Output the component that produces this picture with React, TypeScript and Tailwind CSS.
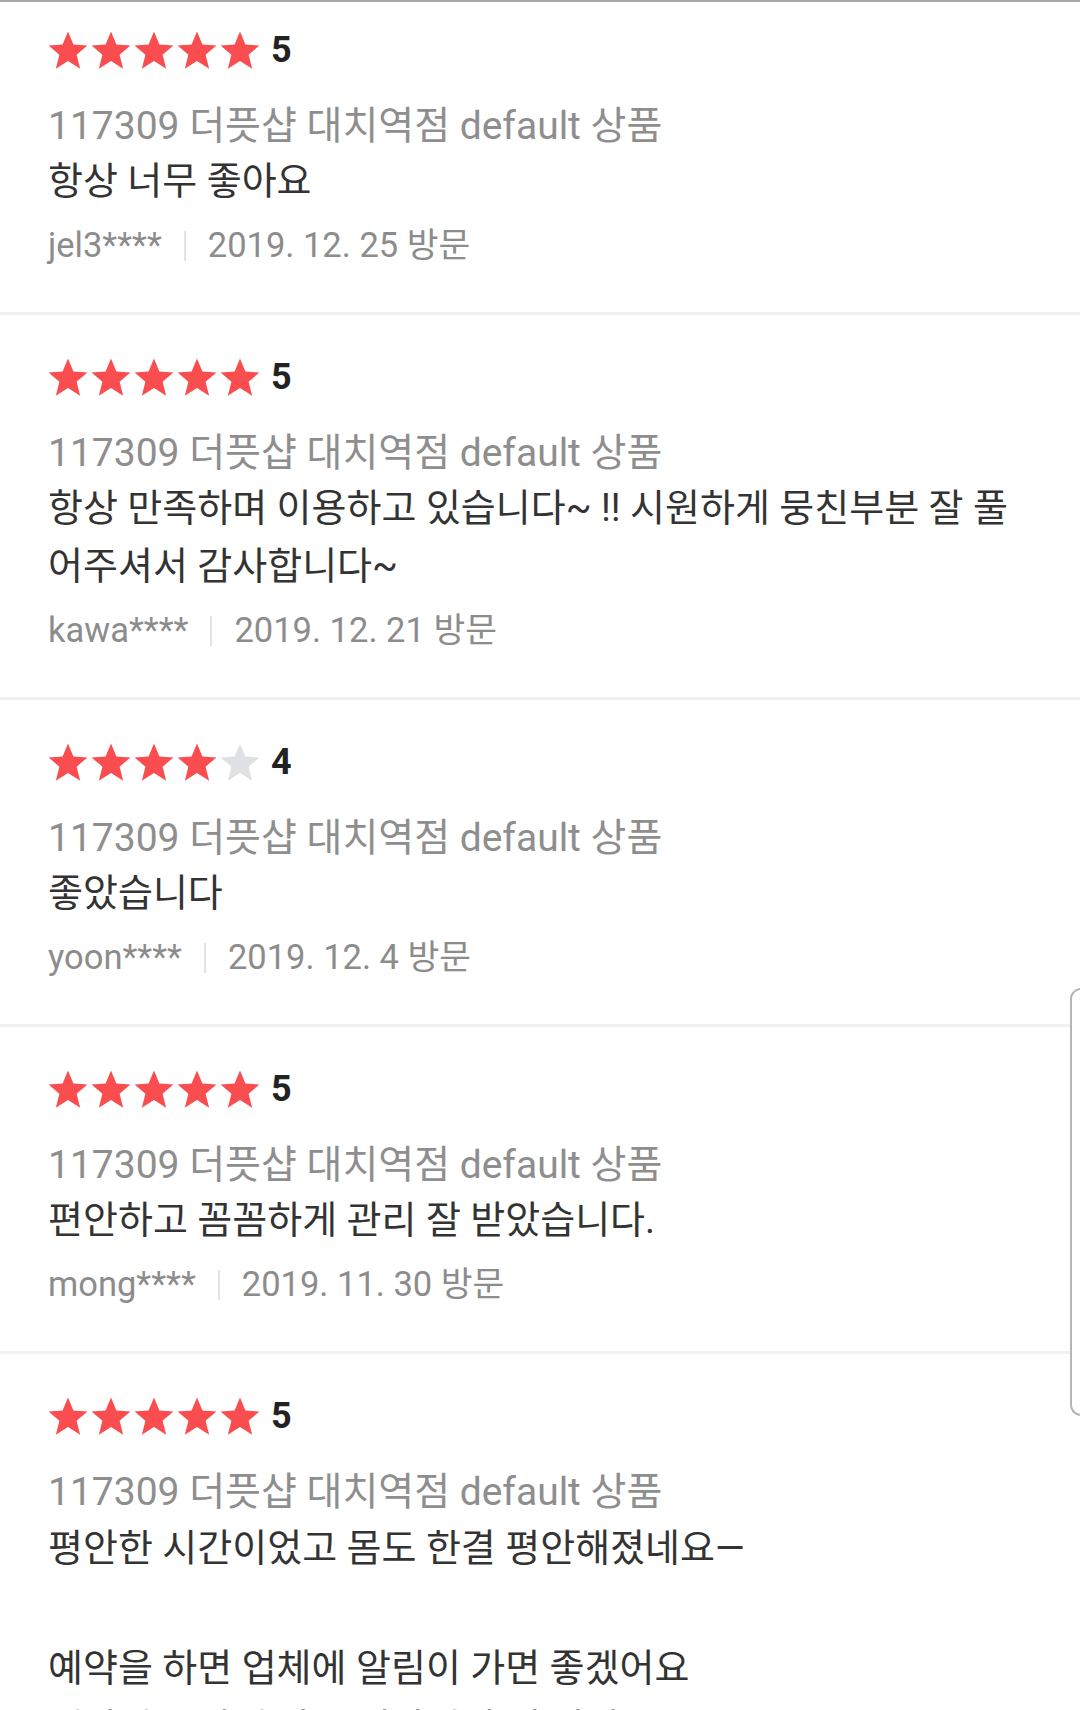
import React from 'react'

type Review = {
  rating: number
  lines: string[]
  user: string
  date: string
}

const reviews: Review[] = [
  { rating: 5, lines: ['항상 너무 좋아요'], user: 'jel3****', date: '2019. 12. 25' },
  {
    rating: 5,
    lines: ['항상 만족하며 이용하고 있습니다~ !! 시원하게 뭉친부분 잘 풀', '어주셔서 감사합니다~'],
    user: 'kawa****',
    date: '2019. 12. 21',
  },
  { rating: 4, lines: ['좋았습니다'], user: 'yoon****', date: '2019. 12. 4' },
  { rating: 5, lines: ['편안하고 꼼꼼하게 관리 잘 받았습니다.'], user: 'mong****', date: '2019. 11. 30' },
]

function Star({ on }: { on: boolean }) {
  return (
    <svg viewBox="0.5 0.5 23 22.5" className="w-[40px] h-[38px]">
      <path
        d="M12 0.8l3.2 7.7 8.3.6-6.4 5.4 2.1 8.3L12 18.3l-7.2 4.5 2.1-8.3L.5 9.1l8.3-.6z"
        fill={on ? '#fa4d4f' : '#dfe1e4'}
      />
    </svg>
  )
}

function Stars({ rating }: { rating: number }) {
  return (
    <div className="flex items-center h-[37px]">
      <div className="flex gap-[3px]">
        {[1, 2, 3, 4, 5].map(i => (
          <Star key={i} on={i <= rating} />
        ))}
      </div>
      <span className="ml-[11px] text-[36px] font-bold text-[#222] leading-none">{rating}</span>
    </div>
  )
}

function ReviewItem({ review, first }: { review: Review; first?: boolean }) {
  return (
    <article className={`px-[48px] pb-[43px] ${first ? 'pt-[29px]' : 'pt-[43px]'}`}>
      <Stars rating={review.rating} />
      <p className="mt-[32px] text-[39px] leading-[52px] text-[#8e8e8e]">117309 더픗샵 대치역점 default 상품</p>
      <p className="text-[38px] leading-[58px] text-[#333]">
        {review.lines.map(line => (
          <span key={line} className="block">
            {line}
          </span>
        ))}
      </p>
      <div className="mt-[13px] flex items-center h-[46px] text-[34.5px] text-[#8c8c8c]">
        <span>{review.user}</span>
        <span className="mx-[22px] w-[2px] h-[30px] bg-[#e3e3e3]" />
        <span>{review.date} 방문</span>
      </div>
    </article>
  )
}

export default function App() {
  return (
    <div
      className="relative w-[1080px] h-[1710px] overflow-hidden bg-white"
      style={{ fontFamily: 'Roboto, "Noto Sans CJK KR", sans-serif' }}
    >
      <div className="h-[2px] bg-[#a8a8a8]" />
      {reviews.map((r, i) => (
        <div key={r.user}>
          <ReviewItem review={r} first={i === 0} />
          <div className="h-[3px] bg-[#f1f1f1]" />
        </div>
      ))}
      <article className="px-[48px] pt-[43px]">
        <Stars rating={5} />
        <p className="mt-[32px] text-[39px] leading-[52px] text-[#8e8e8e]">117309 더픗샵 대치역점 default 상품</p>
        <p className="text-[38px] leading-[60px] text-[#333]">
          <span className="block">평안한 시간이었고 몸도 한결 평안해졌네요—</span>
          <span className="block">&nbsp;</span>
          <span className="block">예약을 하면 업체에 알림이 가면 좋겠어요</span>
          <span className="block">예약된 시간에 가도 기다리던 게 있어요</span>
        </p>
      </article>
      <div className="absolute right-[-12px] top-[988px] w-[22px] h-[428px] rounded-[12px] border-2 border-[#b5b5b5] bg-white" />
    </div>
  )
}
